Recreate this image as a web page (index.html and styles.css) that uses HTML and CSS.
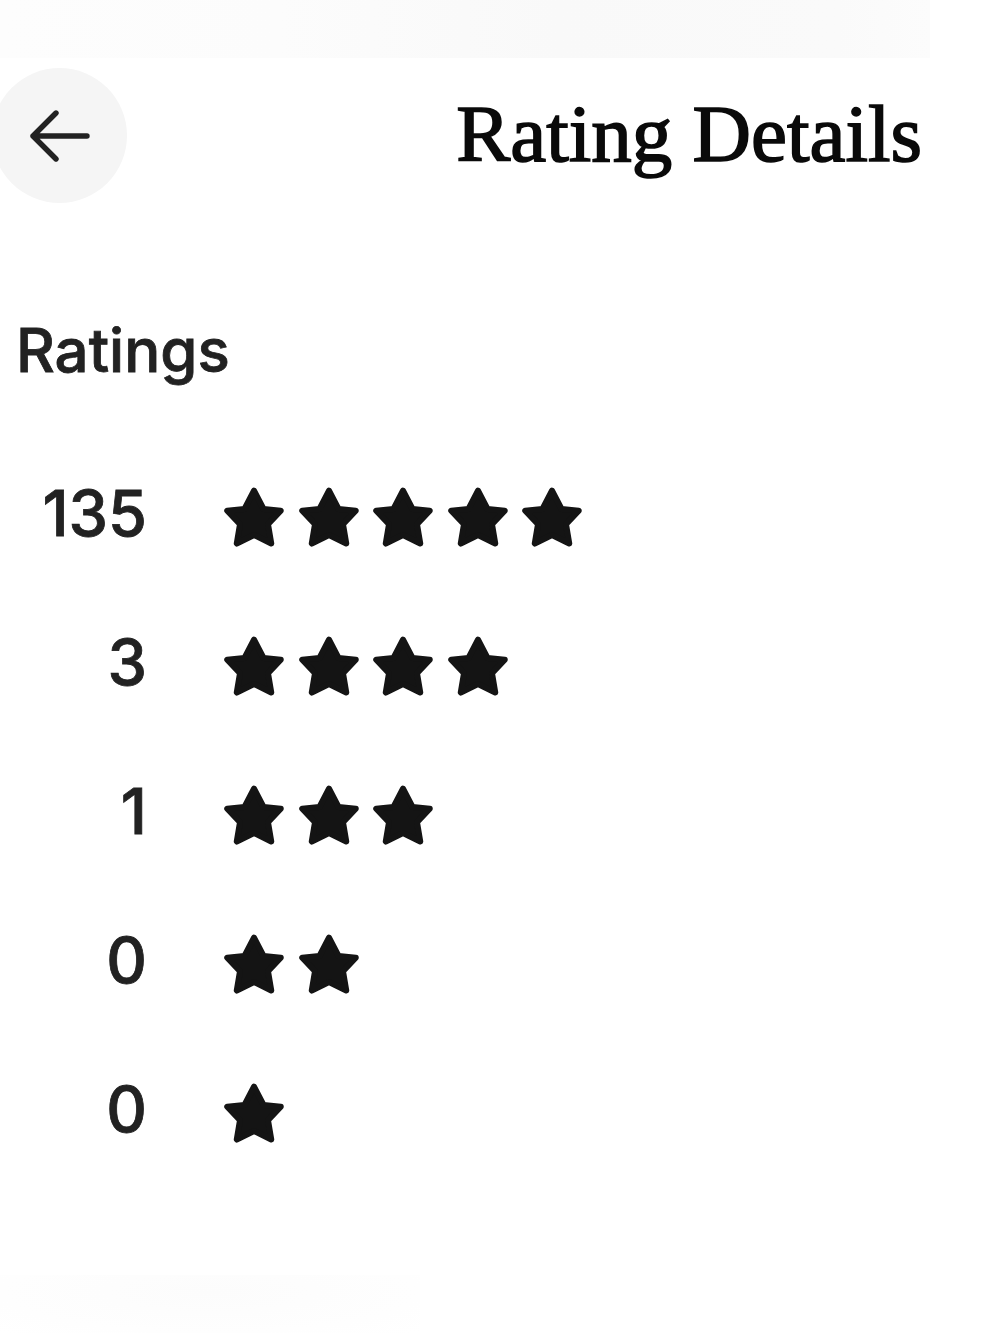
FILE: index.html
```html
<!DOCTYPE html>
<html lang="en">
<head>
<meta charset="utf-8">
<title>Rating Details</title>
<link rel="stylesheet" href="styles.css">
</head>
<body>
<svg class="defs" width="0" height="0"><defs><symbol id="star" viewBox="0 0 24 24"><polygon points="12,1.500 15.800,8.800 22.700,9.500 17.600,14.900 18.900,22.600 12,19.200 5.100,22.600 6.400,14.900 1.300,9.500 8.200,8.800" stroke="#141414" stroke-width="2.400" stroke-linejoin="round"/></symbol></defs></svg>
<div class="topfade"></div>
<header class="header">
  <button class="back" aria-label="Back"><svg viewBox="0 0 60 52" width="60" height="52"><path d="M57 26H3M26 3 3 26l23 23" fill="none" stroke="#222" stroke-width="5.400" stroke-linecap="round" stroke-linejoin="round"/></svg></button>
  <h1 class="title">Rating Details</h1>
</header>
<main class="content">
  <h2 class="section">Ratings</h2>
  <div class="rows">
    <div class="row"><span class="count">135</span><span class="stars"><svg class="star"><use href="#star"/></svg><svg class="star"><use href="#star"/></svg><svg class="star"><use href="#star"/></svg><svg class="star"><use href="#star"/></svg><svg class="star"><use href="#star"/></svg></span></div>
    <div class="row"><span class="count">3</span><span class="stars"><svg class="star"><use href="#star"/></svg><svg class="star"><use href="#star"/></svg><svg class="star"><use href="#star"/></svg><svg class="star"><use href="#star"/></svg></span></div>
    <div class="row"><span class="count">1</span><span class="stars"><svg class="star"><use href="#star"/></svg><svg class="star"><use href="#star"/></svg><svg class="star"><use href="#star"/></svg></span></div>
    <div class="row"><span class="count">0</span><span class="stars"><svg class="star"><use href="#star"/></svg><svg class="star"><use href="#star"/></svg></span></div>
    <div class="row"><span class="count">0</span><span class="stars"><svg class="star"><use href="#star"/></svg></span></div>
  </div>
</main>
<div class="bottomfade"></div>
</body>
</html>
```
FILE: styles.css
```css
html, body { margin: 0; padding: 0; background: #fff; }
body { width: 1000px; height: 1333px; overflow: hidden; display: flex; flex-direction: column; font-family: Inter, "Liberation Sans", sans-serif; color: #222; }
.defs { display: block; height: 0; }
.topfade { flex: none; height: 58px; width: 930px; background: linear-gradient(90deg, #fdfdfd, #fcfcfc 30%, #f9f9f9 60%, #fafafa 90%, #fcfcfc); }
.header { flex: none; display: flex; align-items: center; justify-content: space-between; height: 135px; margin-top: 10px; padding-right: 78px; }
.back { width: 135px; height: 135px; margin-left: -8px; padding: 0; border: 0; border-radius: 50%; background: #f5f5f5; display: flex; align-items: center; justify-content: center; }
.title { margin: 0 0 2px; font-family: "Liberation Serif", serif; font-weight: 400; font-size: 81px; line-height: 1; color: #0a0a0a; -webkit-text-stroke: 1.600px #0a0a0a; letter-spacing: 0; }
.content { flex: none; padding-left: 16px; }
.section { margin: 114px 0 0; font-size: 60px; line-height: 66px; font-weight: 500; color: #222; -webkit-text-stroke: .8px #222; }
.rows { margin-top: 104px; display: flex; flex-direction: column; gap: 89px; }
.row { display: flex; align-items: center; height: 60px; }
.count { width: 131px; text-align: right; font-size: 63px; line-height: 60px; font-weight: 500; color: #222; margin-top: -8px; -webkit-text-stroke: .8px #222; }
.stars { display: flex; margin-left: 77px; gap: 14.500px; }
.star { width: 60px; height: 60px; fill: #141414; }
.bottomfade { flex: none; margin-top: auto; height: 58px; width: 420px; background: radial-gradient(ellipse at 50% 30%, #fcfcfc, #fefefe 70%, #fff); }
```
